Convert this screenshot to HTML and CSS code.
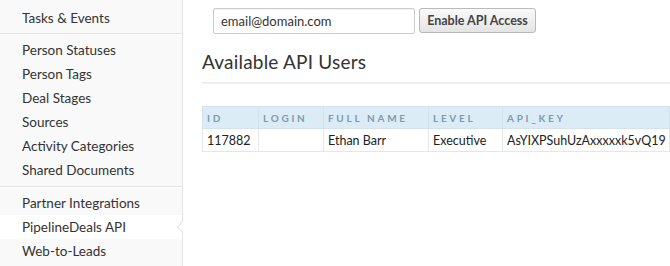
FILE: index.html
```html
<!DOCTYPE html>
<html lang="en">

<head>
    <meta charset="UTF-8">
    <meta name="viewport" content="width=device-width, initial-scale=1.0">
    <title>API Settings</title>
    <link rel="stylesheet" href="styles.css">
</head>

<body>
    <div class="layout">
        <div class="sidebar">
            <ul class="nav">
                <li>Tasks &amp; Events</li>
            </ul>
            <ul class="nav">
                <li>Person Statuses</li>
                <li>Person Tags</li>
                <li>Deal Stages</li>
                <li>Sources</li>
                <li>Activity Categories</li>
                <li>Shared Documents</li>
            </ul>
            <ul class="nav">
                <li>Partner Integrations</li>
                <li class="active">PipelineDeals API</li>
                <li>Web-to-Leads</li>
            </ul>
        </div>

        <div class="main">
            <form class="access">
                <input type="text" class="email" value="email@domain.com">
                <button type="button" class="btn">Enable API Access</button>
            </form>
            <h2 class="title">Available API Users</h2>

            <table class="users">
                <thead>
                    <tr>
                        <th class="c-id">ID</th>
                        <th class="c-login">Login</th>
                        <th class="c-name">Full Name</th>
                        <th class="c-level">Level</th>
                        <th class="c-key">API_Key</th>
                    </tr>
                </thead>
                <tbody>
                    <tr>
                        <td>117882</td>
                        <td></td>
                        <td>Ethan Barr</td>
                        <td>Executive</td>
                        <td>AsYIXPSuhUzAxxxxxk5vQ19</td>
                    </tr>
                </tbody>
            </table>
        </div>
    </div>
</body>

</html>
```

FILE: styles.css
```css
body {
    margin: 0;
    font-family: Lato, "Liberation Sans", sans-serif;
    color: #333;
    background-color: #fff;
    overflow: hidden;
}

.layout {
    display: flex;
    height: 266px;
}

.sidebar {
    width: 182px;
    flex-shrink: 0;
    background-color: #f9f9f9;
    border-right: 1px solid #e3e3e3;
}

.nav {
    list-style: none;
    margin: 0;
    padding: 4px 0 4px;
    border-bottom: 1px solid #e2e2e2;
    box-shadow: 0 1px 0 #fff;
}

.nav:first-child {
    padding-top: 6px;
    padding-bottom: 3px;
}

.nav:last-child {
    padding-top: 4px;
    border-bottom: none;
    box-shadow: none;
}

.nav li {
    position: relative;
    height: 24px;
    line-height: 24px;
    padding-left: 22px;
    font-size: 13.5px;
    color: #333;
}

.nav li.active {
    background-color: #fff;
}

.nav li.active::after {
    content: "";
    position: absolute;
    right: -1px;
    top: 6px;
    width: 0;
    height: 0;
    border-top: 6px solid transparent;
    border-bottom: 6px solid transparent;
    border-right: 6px solid #d6d6d6;
}

.nav li.active::before {
    content: "";
    position: absolute;
    right: -1px;
    top: 7px;
    width: 0;
    height: 0;
    border-top: 5px solid transparent;
    border-bottom: 5px solid transparent;
    border-right: 5px solid #fff;
    z-index: 1;
}

.main {
    flex: 1;
    min-width: 0;
    padding: 8px 0 0 19px;
}

.access {
    display: flex;
    gap: 4px;
    margin: 0 0 0 11px;
}

.email {
    width: 202px;
    height: 26px;
    box-sizing: border-box;
    padding: 0 7px;
    border: 1px solid #ccc;
    border-radius: 2px;
    font-family: inherit;
    font-size: 13px;
    color: #333;
    box-shadow: inset 0 1px 1px rgba(0, 0, 0, 0.05);
}

.btn {
    width: 117px;
    height: 25px;
    padding: 0;
    border: 1px solid #b9b9b9;
    border-radius: 3px;
    background: linear-gradient(#fafafa, #e4e4e4);
    font-family: inherit;
    font-size: 12.5px;
    font-weight: bold;
    color: #444;
    cursor: pointer;
}

.title {
    margin: 16px 0 0;
    padding-bottom: 8px;
    border-bottom: 2px solid #efefef;
    font-size: 19px;
    line-height: 24px;
    font-weight: normal;
    color: #333;
    letter-spacing: 0.2px;
}

.users {
    margin-top: 22px;
    width: 100%;
    table-layout: fixed;
    border-collapse: collapse;
    font-size: 12.5px;
}

.users th {
    height: 21px;
    padding: 0 4px;
    text-align: left;
    background-color: #dcecf7;
    border: 1px solid #d2e3ee;
    font-size: 10px;
    font-weight: bold;
    letter-spacing: 2.7px;
    text-transform: uppercase;
    color: #7f9aab;
    white-space: nowrap;
}

.users td {
    height: 22px;
    padding: 0 4px;
    border: 1px solid #e6e6e6;
    color: #222;
    white-space: nowrap;
}

.c-id { width: 47px; }
.c-login { width: 56px; }
.c-name { width: 96px; }
.c-level { width: 65px; }
```
